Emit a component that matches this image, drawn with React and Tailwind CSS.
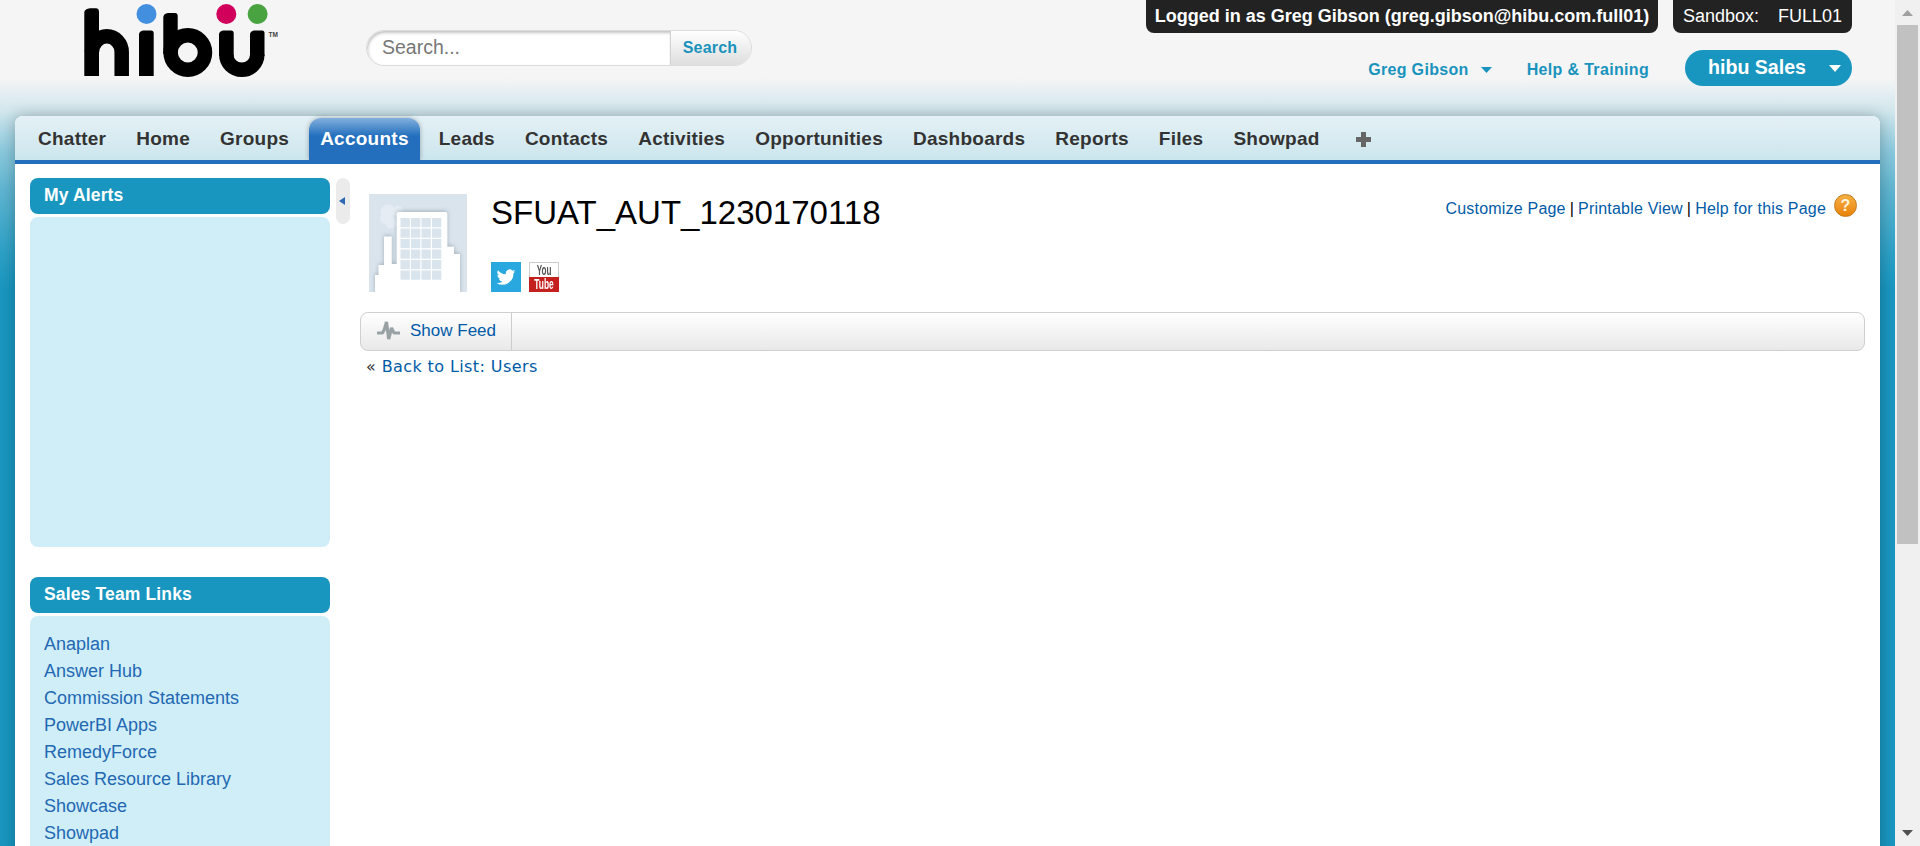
const tabs = [
  'Chatter', 'Home', 'Groups', 'Accounts', 'Leads', 'Contacts', 'Activities',
  'Opportunities', 'Dashboards', 'Reports', 'Files', 'Showpad',
];

const salesLinks = [
  'Anaplan', 'Answer Hub', 'Commission Statements', 'PowerBI Apps',
  'RemedyForce', 'Sales Resource Library', 'Showcase', 'Showpad',
];

function Logo() {
  return (
    <svg className="h-[80px] w-[200px]" viewBox="0 0 200 80" fill="none" aria-label="hibu">
      <g fill="#000">
        <path d="M.3 76V12Q1 9 6 8.300H12Q15 8.300 15 12V76Z" />
        <path d="M55 76V34Q55.500 31 59 30.500H67Q69.700 30.500 69.700 33V76Z" />
        <path d="M79.300 54V17Q79.800 13.500 84 13H91Q93.700 13 93.700 16V54Z" />
        <path d="M135 56V34Q135.500 31 139 30.500H147Q149.700 30.500 149.700 33V56Z" />
        <path d="M166 56V34Q166.500 31 170 30.500H178Q180.500 30.500 180.500 33V56Z" />
      </g>
      <g stroke="#000" strokeWidth="14.5">
        <path d="M8 52A14.700 15.500 0 0 1 37.700 52V76" />
        <circle cx="103.800" cy="52.500" r="17.200" />
        <path d="M142.300 54.500A15.500 15.300 0 0 0 173.300 54.500" />
      </g>
      <circle cx="62.500" cy="14" r="10" fill="#428fe0" />
      <circle cx="142.300" cy="14" r="10" fill="#d0005b" />
      <circle cx="173.600" cy="14" r="10" fill="#48a340" />
      <text x="184.500" y="37" fontSize="6.5" fontWeight="700" fill="#444" fontFamily="Liberation Sans, sans-serif">TM</text>
    </svg>
  );
}

function Building() {
  return (
    <svg className="h-[98px] w-[98px]" viewBox="0 0 98 98">
      <defs>
        <filter id="soft" x="-20%" y="-20%" width="140%" height="140%">
          <feDropShadow dx="0" dy="-1" stdDeviation="2.200" floodColor="#8d9aa6" floodOpacity=".7" />
        </filter>
      </defs>
      <rect width="98" height="98" fill="#d9e4ed" />
      <g fill="#e5ecf3"><circle cx="19" cy="18" r="7.500" /><circle cx="16" cy="25" r="5" /><circle cx="22" cy="29" r="5.500" /><circle cx="29" cy="17" r="5" /></g>
      <path d="M6 100V81H9.500V71H15V42.500H22.700V70H27.700V20Q27.700 18 29.500 18H76.500Q78.300 18 78.300 20V52.700H85V60H91V100Z" fill="#fff" filter="url(#soft)" />
      {[0, 1, 2, 3, 4, 5].map((r) => [0, 1, 2, 3].map((c) => (
        <rect key={`${r}-${c}`} x={31.5 + c * 10.5} y={24 + r * 10.5} width="9.300" height="9.200" fill="#d9e4ed" />
      )))}
    </svg>
  );
}

function SidebarBox({ title, className, children }) {
  return (
    <section>
      <h2 className="h-9 rounded-lg bg-[#1996c0] pl-3.5 text-[17.5px] font-bold leading-[34px] tracking-[0.15px] text-white">{title}</h2>
      <div className={`mt-[3px] rounded-lg bg-[#d0eef8] ${className}`}>{children}</div>
    </section>
  );
}

export default function App() {
  return (
    <div className="flex h-[846px] w-[1920px] overflow-hidden bg-[#f0f0f0] font-['Liberation_Sans',Arial,sans-serif]">
      <div className="flex w-[1895px] flex-col bg-[linear-gradient(180deg,#f5f5f6_0px,#f5f5f6_78px,#d0e6ed_112px,#8ccade_150px,#5fb5d1_190px,#2ba0c6_255px,#1996c0_290px)]">
        <header className="flex h-[116px] shrink-0 justify-between pl-[84px] pr-[43px]">
          <div className="flex">
            <Logo />
            <form className="ml-[82px] mt-[30px] flex h-9 w-[386px] overflow-hidden rounded-full border border-[#dcdcdc]">
              <div className="w-[304px] rounded-l-full border-r border-[#d2d2d2] bg-white pl-[15px] text-[19.5px] leading-[32px] text-[#777] shadow-[inset_1px_2px_3px_#c4c4c4]">Search...</div>
              <button type="button" className="flex-1 bg-linear-to-b from-white to-[#dedede] pr-0.5 text-[16px] font-bold tracking-[0.2px] text-[#1993bd]">Search</button>
            </form>
          </div>
          <div className="flex flex-col items-end">
            <div className="flex gap-[15px] text-[18px] leading-8 text-white">
              <div className="h-[33px] w-[512px] rounded-b-lg bg-[#222] text-center font-bold">Logged in as Greg Gibson (greg.gibson@hibu.com.full01)</div>
              <div className="flex h-[33px] w-[179px] justify-between rounded-b-lg bg-[#222] px-2.5"><span>Sandbox:</span><span>FULL01</span></div>
            </div>
            <div className="mt-[17px] flex h-9 items-center text-[16px] font-bold tracking-[0.33px] text-[#1993bd]">
              <span className="pt-[3px]">Greg Gibson</span>
              <svg className="ml-3 mr-[35px] mt-[3px] h-1.5 w-[11px]" viewBox="0 0 11 6"><path d="M0 0H11L5.500 6Z" fill="currentColor" /></svg>
              <span className="pt-[3px]">Help &amp; Training</span>
              <div className="ml-9 flex h-9 w-[167px] items-center rounded-full bg-[#1996c0] pl-[23px] pr-[11px] text-[19.6px] tracking-normal text-white">
                <span>hibu Sales</span>
                <svg className="ml-auto h-[7px] w-3" viewBox="0 0 12 7"><path d="M0 0H12L6 7Z" fill="#fff" /></svg>
              </div>
            </div>
          </div>
        </header>
        <main className="mx-[15px] flex-1 rounded-t-lg bg-white shadow-[0_0_15px_rgba(0,0,0,.27)]">
          <nav className="flex h-12 items-start rounded-t-lg border-b-4 border-[#236fbd] bg-linear-to-b from-[#e4f1f6] to-[#cce6ed] pl-2 pt-0.5 text-[19px] font-bold tracking-[0.25px] text-[#333]">
            {tabs.map((tab) => (
              <a key={tab} className={tab === 'Accounts' ? 'ml-[5px] mr-1 h-[42px] rounded-t-xl bg-[linear-gradient(180deg,#83b0dd,#236fbd_18px)] px-[11px] leading-[42px] text-white shadow-[0_0_5px_rgba(0,0,0,.3)] [clip-path:inset(-5px_-6px_0_-6px)]' : 'h-[42px] px-[15px] leading-[42px]'}>{tab}</a>
            ))}
            <svg className="ml-[21px] mt-3.5 size-[15px]" viewBox="0 0 15 15"><path d="M5 0H10V5H15V10H10V15H5V10H0V5H5Z" fill="#666" /></svg>
          </nav>
          <div className="flex pl-[15px] pr-[15px] pt-3.5">
            <aside className="w-[300px] space-y-[30px]">
              <SidebarBox title="My Alerts" className="h-[330px]" />
              <SidebarBox title="Sales Team Links" className="h-[240px] px-3.5 pt-[15px]">
                {salesLinks.map((link) => <a key={link} className="block text-[18px] leading-[27px] text-[#2268b2]">{link}</a>)}
              </SidebarBox>
            </aside>
            <button type="button" aria-label="Collapse sidebar" className="ml-1.5 flex h-[46px] w-3.5 items-center rounded-full bg-[#ebebeb] pl-[3px]">
              <svg className="h-2 w-1.5" viewBox="0 0 6 8"><path d="M0 4L6 0V8Z" fill="#2d68b4" /></svg>
            </button>
            <section className="ml-2.5 min-w-0 flex-1">
              <div className="flex h-[134px] pl-[9px] pt-4">
                <Building />
                <div className="ml-6">
                  <h1 className="whitespace-nowrap text-[33px] leading-[38px] text-black">SFUAT_AUT_1230170118</h1>
                  <div className="mt-[30px] flex gap-2">
                    <svg className="size-[30px] bg-[#29a8e0]" viewBox="-7.3 -7.3 38.5 38.5"><path fill="#fff" d="M23.900 4.600a10 10 0 0 1-2.800.8 5 5 0 0 0 2.200-2.700 10 10 0 0 1-3.100 1.200 4.900 4.900 0 0 0-8.400 4.500A14 14 0 0 1 1.700 3.200a4.900 4.900 0 0 0 1.500 6.600 5 5 0 0 1-2.200-.6 4.900 4.900 0 0 0 3.900 4.900 5 5 0 0 1-2.200.1 4.900 4.900 0 0 0 4.600 3.400A10 10 0 0 1 0 19.500a14 14 0 0 0 21.500-12.400 10 10 0 0 0 2.400-2.500z" /></svg>
                    <div className="h-[30px] w-[30px] border border-b-0 border-[#ccc] bg-white font-bold">
                      <div className="flex h-3.5 scale-x-[.58] justify-center text-[14px] leading-[14px] text-[#555]">You</div>
                      <div className="-mx-px h-[15px] bg-[#c4201d] text-[14px] leading-[15px] text-white"><div className="flex scale-x-[.6] justify-center">Tube</div></div>
                    </div>
                  </div>
                </div>
                <div className="ml-auto mr-2 flex h-[30px] items-center gap-1 text-[16px] tracking-[0.2px] text-[#015ba7]">
                  <a>Customize Page</a><span className="text-black">|</span><a>Printable View</a><span className="text-black">|</span><a>Help for this Page</a>
                  <span className="mb-[7px] ml-1 flex size-[23px] items-center justify-center rounded-full border border-[#c07a1c] bg-linear-to-b from-[#f5b040] to-[#e98200] text-[16px] font-bold text-[#fff3dc]">?</span>
                </div>
              </div>
              <div className="flex h-[39px] rounded-lg border border-[#d0d0d0] bg-linear-to-b from-white to-[#e9e9e9]">
                <a className="flex w-[151px] items-center border-r border-[#ccc] pb-0.5 pl-4 text-[17px] text-[#015ba7]">
                  <svg className="mr-2.5 size-[23px]" viewBox="0 0 23 23"><path d="M0 14H5.500L7.500 10L9.500 3L11.700 20L14.500 9L17 14H23" fill="none" stroke="#98a2a5" strokeWidth="3.200" strokeLinejoin="bevel" /></svg>
                  Show Feed
                </a>
              </div>
              <div className="pl-1.5 pt-1 font-['DejaVu_Sans',sans-serif] text-[16px] leading-6 tracking-[0.4px] text-[#333]">« <a className="text-[#015ba7]">Back to List: Users</a></div>
            </section>
          </div>
        </main>
      </div>
      <div className="flex w-[25px] flex-col items-center">
        <svg className="h-[25px] w-[11px]" viewBox="0 0 11 25"><path d="M0 16L5.500 10L11 16Z" fill="#a0a0a0" /></svg>
        <div className="h-[519px] w-[21px] bg-[#c1c1c1]" />
        <svg className="mt-auto h-[25px] w-[11px]" viewBox="0 0 11 25"><path d="M0 9L5.500 15L11 9Z" fill="#505050" /></svg>
      </div>
    </div>
  );
}
